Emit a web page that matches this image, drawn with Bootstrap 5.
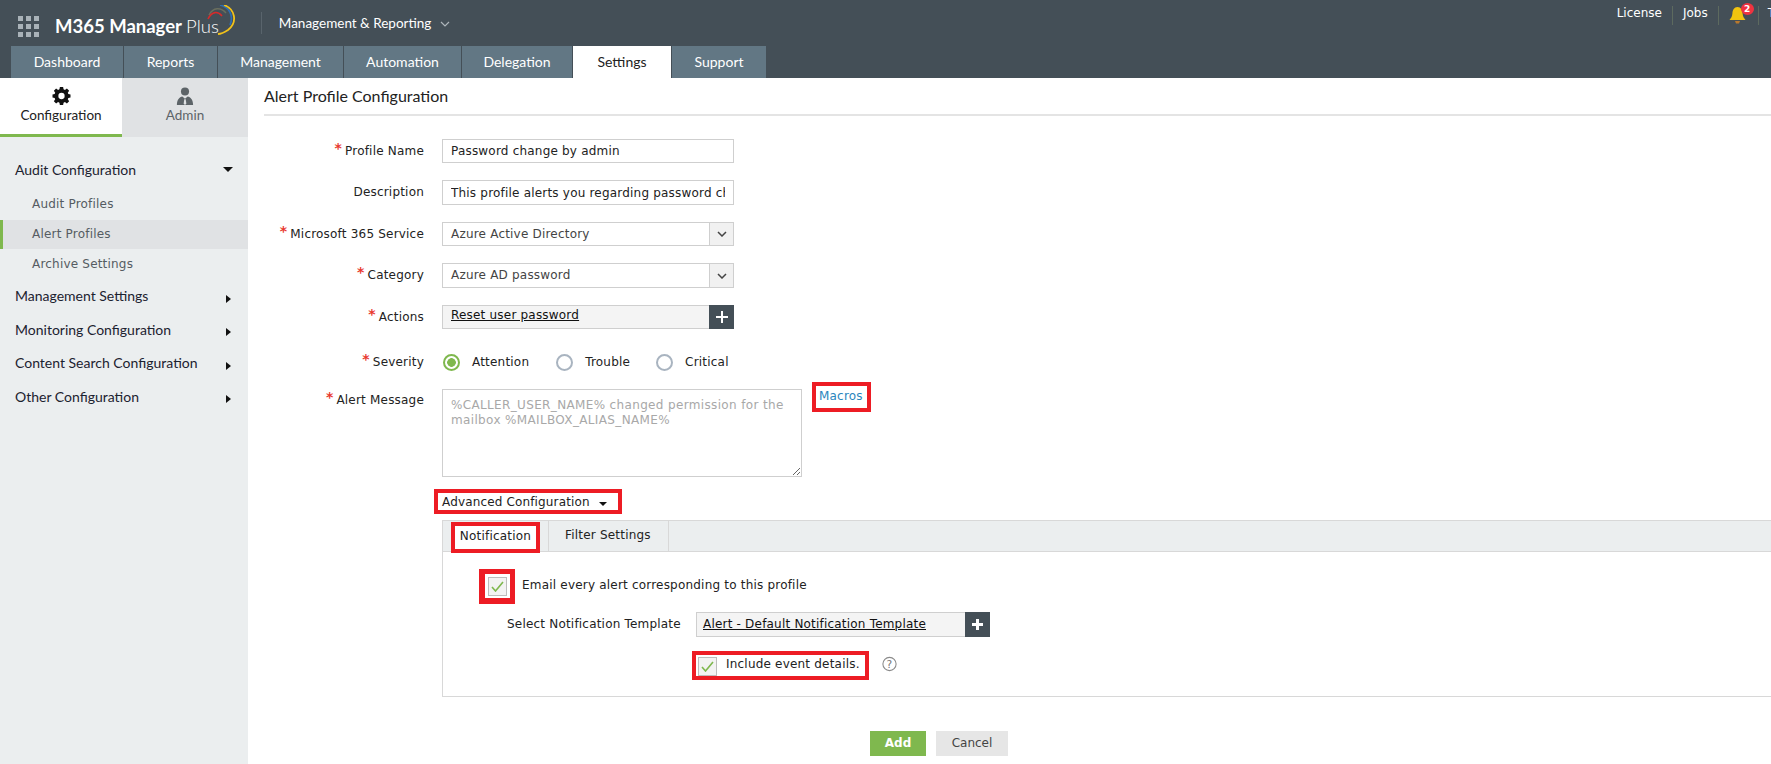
<!DOCTYPE html>
<html lang="en">
<head>
<meta charset="utf-8">
<title>Alert Profile Configuration</title>
<link rel="stylesheet" href="https://cdn.jsdelivr.net/npm/bootstrap@5.3.0/dist/css/bootstrap.min.css">
<style>
html,body{height:764px;overflow:hidden}
body{font-family:"DejaVu Sans",sans-serif;font-size:12px;letter-spacing:.2px;color:#222;background:#fff}
.top-head{background:#444f57;height:78px;letter-spacing:0}
.head-row{height:46px}
.app-grid{display:grid;grid-template-columns:repeat(3,5px);gap:3px;margin:0 16px 0 18px;position:relative;top:3px}
.app-grid i{display:block;width:5px;height:5px;background:#a9b2b8}
.brand-txt{font-family:Lato,sans-serif;font-size:18.5px;font-weight:700;color:#fff;white-space:nowrap;position:relative;top:4px}
.brand-txt span{font-weight:300}
.brand-arc{width:33px;height:30px;margin-left:-15px;margin-top:-7px;flex:none}
.head-sep{width:1px;height:22px;background:#59646c;margin:0 17px 0 24px}
.mod-name{font-family:Lato,sans-serif;font-size:13.5px;color:#fff}
.mod-chev{margin-left:9px;position:relative;top:1px}
.util-links{align-self:flex-start;height:24px;margin:3px -14px 0 0;font-size:12px;color:#fff}
.util-links span.lnk{padding:0 10px;position:relative;top:-2px}
.util-links span.lnk.lnk-end{padding-left:9px}
.util-links .vsep{width:1px;height:19px;background:#5d6a5f}
.bell-wrap{position:relative;width:39px;height:20px}
.bell-wrap svg{position:absolute;left:10px;top:1px}
.bell-count{position:absolute;left:22px;top:-2px;width:13px;height:12px;border-radius:50%;background:#ef3340;color:#fff;font-size:9px;font-weight:700;line-height:12px;text-align:center}
.main-tabs{margin-left:11px;height:32px;gap:1px;border:0}
.main-tabs .nav-link{height:32px;padding:0;line-height:31px;text-align:center;background:#627784;color:#fff;font-family:Lato,sans-serif;font-size:14px;border:0;border-radius:0;margin:0}
.main-tabs .nav-link.active{background:#fff;color:#222}
.tw-1{width:112px}.tw-2{width:93px}.tw-3{width:125px}.tw-4{width:117px}.tw-5{width:110px}.tw-6{width:98px}.tw-7{width:94px}
.app-body{height:686px}
.side-col{width:248px;flex:none;background:#ebeeef;font-family:Lato,sans-serif;letter-spacing:0}
.side-tabs{height:59px}
.side-tab{width:122px;height:59px;text-align:center;font-size:13.5px;color:#222;background:#fff;border-bottom:3px solid #7fb84e;padding-top:9px}
.side-tab.off{width:126px;background:#e0e2e4;border-bottom-color:#e0e2e4;color:#5d6468}
.side-tab svg{display:block;margin:0 auto 0;height:18px}
.side-list{padding-top:15px}
.side-head{height:33.5px;padding:0 15px;font-size:14px;color:#1c2230;display:flex;align-items:center;justify-content:space-between}
.side-head.first{height:34px}
.side-sub{height:29px;margin-bottom:1px;padding:0 0 2px 32px;display:flex;align-items:center;font-family:"DejaVu Sans",sans-serif;font-size:12px;color:#555c62;letter-spacing:.2px}
.side-head + .side-sub{margin-top:4px}
.side-sub.lastsub{margin-bottom:0}
.side-sub.on{background:#e0e2e4;border-left:3px solid #7fb84e;padding-left:29px}
.tri-d{width:0;height:0;border-left:5px solid transparent;border-right:5px solid transparent;border-top:5px solid #111;display:inline-block}
.tri-r{width:0;height:0;border-top:4px solid transparent;border-bottom:4px solid transparent;border-left:5px solid #111;display:inline-block;margin-right:2px;position:relative;top:3px}
.content-col{min-width:0}
.page-title{height:38px;margin-left:16px;border-bottom:2px solid #e4e4e4;font-family:Lato,sans-serif;font-size:16px;line-height:35px;color:#222;letter-spacing:0}
.form-area{padding-top:23px}
.f-row{display:flex;margin-bottom:17px}
.f-row.rw-act{margin-bottom:21px}
.f-row.rw-sev{margin-bottom:15px}
.f-row.rw-msg{margin-bottom:0}
.f-lab{width:176px;height:24px;flex:none;text-align:right;margin-right:18px;color:#222;line-height:25px;white-space:nowrap}
.rw-msg .f-lab{line-height:23px}
.f-lab b{color:#e8392f;font-weight:700;font-size:14px;line-height:0;margin-right:3px;position:relative;top:-2px}
.f-field{width:292px;height:24px}
.f-field.tall{height:25px}
input.f-input{height:100%;border:1px solid #cfcfcf;border-radius:0;padding:0 8px;font-size:12px;letter-spacing:.2px;color:#222;font-family:"DejaVu Sans",sans-serif;box-shadow:none}
.sel-box{display:flex;border:1px solid #cfcfcf;color:#444}
.sel-box .sel-val{flex:1;padding:0 8px;line-height:22px}
.sel-box .sel-btn{width:24px;background:#f1f1f1;border-left:1px solid #cfcfcf;display:flex;align-items:center;justify-content:center}
.pick-box{display:flex;border:1px solid #cfcfcf;background:#f4f4f4}
.pick-box a{flex:1;padding:0 8px;color:#111;line-height:18px;text-decoration:underline}
.tpl-box.pick-box a{line-height:23px;padding-left:6px}
.pick-plus{width:25px;margin:-1px -1px -1px 0;background:#444f57;display:flex;align-items:center;justify-content:center}
.rad-set{height:24px;display:flex;align-items:center;color:#222}
input.rad-in{width:17px;height:17px;margin:0 12px 0 1px;border:2px solid #a9b4c0;background:#fff;box-shadow:none;flex:none;float:none}
input.rad-in:checked{border-color:#7fb84e;background-color:#fff;background-image:radial-gradient(circle,#7fb84e 0 4px,#fff 4.6px)}
.rad-lab{margin-right:26px}
.rad-lab.rl-2{margin-right:25px}
textarea.msg-area{width:360px;height:88px;border:1px solid #cfcfcf;border-radius:0;padding:8px;font-size:12px;letter-spacing:.35px;line-height:15px;color:#a8a8a8;resize:both;font-family:"DejaVu Sans",sans-serif;box-shadow:none;flex:none}
.red-box{border:4px solid #ed1c24;background:#fff}
.macros-box{margin:-7px 0 0 10px;width:59px;height:30px;color:#2b86bd;padding-left:3px;line-height:21px;text-decoration:none}
.adv-wrap{margin-left:194px}
.adv-box{margin-left:-8px;width:188px;height:25px;padding-left:4px;line-height:19px;color:#222;margin-top:12px;letter-spacing:.15px}
.adv-box .tri-d{margin-left:9px;border-left-width:4px;border-right-width:4px;border-top-width:4px}
.notif-panel{margin:6px 0 0 194px;height:177px;border:1px solid #d8d8d8;border-right:0;position:relative}
.panel-tabs{height:31px;background:#ebeeef;border-bottom:1px solid #d8d8d8;padding-left:8px;gap:0}
.panel-tabs .nb-tab{height:31px;margin:1px 8px 0 0;width:89px;text-align:center;line-height:21px;color:#222}
.panel-tabs .nf-tab{width:121px;border-right:1px solid #d8d8d8;border-left:1px solid #d8d8d8;padding-left:16px;line-height:28px;color:#222;height:30px}
.chk-red{width:36px;height:35px;margin:17px 0 0 36px;display:flex;align-items:center;justify-content:center;border-width:5px 5px 6px 6px}
.chk-mark{width:19px;height:19px;border:1px solid #bdbdbd;background:#f3f3f3;display:flex;align-items:center;justify-content:center;flex:none}
.email-txt{margin:17px 0 0 7px;height:35px;line-height:33px}
.tpl-row{margin-top:8px}
.tpl-lab{margin-left:64px;width:189px;line-height:25px;white-space:nowrap}
.tpl-box{width:294px;height:25px}
.inc-row{margin-top:14px}
.inc-box{margin-left:249px;width:177px;height:29px;padding:0 0 3px 2px;display:flex;align-items:center;white-space:nowrap;line-height:14px}
.inc-box .chk-mark{margin-right:9px;margin-top:4px}
.help-ic{margin:5px 0 0 13px}
.btn.add-btn{width:56px;height:25px;padding:0;border:0;border-radius:0;background:#7fb84e;color:#fff;font-size:12px;font-weight:700;line-height:25px}
.btn.cancel-btn{width:72px;height:25px;padding:0;border:0;border-radius:0;background:#e6e6e6;color:#444;font-size:12px;line-height:25px;margin-left:10px}
.act-row{margin:34px 0 0 622px}
</style>
</head>
<body>
<header class="top-head d-flex flex-column">
  <div class="head-row d-flex align-items-center">
    <div class="app-grid"><i></i><i></i><i></i><i></i><i></i><i></i><i></i><i></i><i></i></div>
    <div class="brand-txt">M365 Manager <span>Plus</span></div>
    <svg class="brand-arc" viewBox="0 0 33 30" fill="none">
      <path d="M5 10C9 2 17 2 22 8" stroke="#6b6f5e" stroke-width="1.4"/>
      <path d="M4 14C8 6 14 6 18 11" stroke="#d62b2b" stroke-width="1.6"/>
      <path d="M16 0C25 2 30 10 26 20" stroke="#2f6fb3" stroke-width="1.6"/>
      <path d="M20 0C31 4 34 17 24 25C21 27 17 29 14 29" stroke="#f2c21a" stroke-width="1.8"/>
    </svg>
    <div class="head-sep"></div>
    <div class="mod-name">Management &amp; Reporting</div>
    <svg class="mod-chev" width="10" height="6" viewBox="0 0 10 6" fill="none"><path d="M1 1l4 4 4-4" stroke="#aeb6bb" stroke-width="1.2"/></svg>
    <div class="util-links ms-auto d-flex align-items-center">
      <span class="lnk">License</span><span class="vsep"></span>
      <span class="lnk">Jobs</span><span class="vsep"></span>
      <span class="bell-wrap"><svg width="17" height="19" viewBox="0 0 17 19"><path d="M8.500 1C5 1 3.600 4 3.400 7.500C3.200 10.500 2 12 .5 14H16.500C15 12 13.800 10.500 13.600 7.500C13.400 4 12 1 8.500 1Z" fill="#f1c40f"/><path d="M6 15h5l-1 2.500H7z" fill="#b9792d"/></svg><span class="bell-count">2</span></span><span class="vsep"></span>
      <span class="lnk lnk-end">T</span>
    </div>
  </div>
  <nav class="nav main-tabs">
    <a class="nav-link tw-1" href="#">Dashboard</a>
    <a class="nav-link tw-2" href="#">Reports</a>
    <a class="nav-link tw-3" href="#">Management</a>
    <a class="nav-link tw-4" href="#">Automation</a>
    <a class="nav-link tw-5" href="#">Delegation</a>
    <a class="nav-link tw-6 active" href="#">Settings</a>
    <a class="nav-link tw-7" href="#">Support</a>
  </nav>
</header>
<div class="app-body d-flex">
  <aside class="side-col">
    <div class="side-tabs d-flex">
      <div class="side-tab">
        <svg width="19" height="18" viewBox="0 0 20 20"><path fill="#111" fill-rule="evenodd" d="M8.200 0h3.600l.5 2.600 1.500.6 2.200-1.500 2.500 2.500-1.500 2.200.6 1.500 2.400.5v3.200l-2.400.5-.6 1.500 1.500 2.200-2.500 2.500-2.200-1.500-1.500.6-.5 2.600H8.200l-.5-2.600-1.500-.6L4 18.300 1.500 15.800 3 13.600l-.6-1.500L0 11.600V8.400l2.400-.5.600-1.500L1.500 4.200 4 1.700l2.200 1.500 1.500-.6zM10 6.500a3.500 3.500 0 1 0 0 7 3.500 3.500 0 0 0 0-7z"/></svg>
        Configuration
      </div>
      <div class="side-tab off">
        <svg width="20" height="18" viewBox="0 0 20 20"><circle cx="10" cy="5" r="4.500" fill="#5d6468"/><path d="M1 20c0-6 3-9 6-9.500l3 2.500 3-2.500c3 .5 6 3.500 6 9.500z" fill="#5d6468"/><path d="M9.200 13.500h1.600l.7 5-1.500 1.500-1.500-1.500z" fill="#e0e2e4"/></svg>
        Admin
      </div>
    </div>
    <div class="side-list">
      <div class="side-head first"><span>Audit Configuration</span><i class="tri-d"></i></div>
      <div class="side-sub">Audit Profiles</div>
      <div class="side-sub on">Alert Profiles</div>
      <div class="side-sub lastsub">Archive Settings</div>
      <div class="side-head"><span>Management Settings</span><i class="tri-r"></i></div>
      <div class="side-head"><span>Monitoring Configuration</span><i class="tri-r"></i></div>
      <div class="side-head"><span>Content Search Configuration</span><i class="tri-r"></i></div>
      <div class="side-head"><span>Other Configuration</span><i class="tri-r"></i></div>
    </div>
  </aside>
  <main class="content-col flex-grow-1">
    <div class="page-title">Alert Profile Configuration</div>
    <form class="form-area">
      <div class="f-row">
        <label class="f-lab"><b>*</b>Profile Name</label>
        <div class="f-field"><input class="form-control f-input" value="Password change by admin"></div>
      </div>
      <div class="f-row">
        <label class="f-lab">Description</label>
        <div class="f-field tall"><input class="form-control f-input" value="This profile alerts you regarding password changes by admin"></div>
      </div>
      <div class="f-row">
        <label class="f-lab"><b>*</b>Microsoft 365 Service</label>
        <div class="f-field sel-box"><span class="sel-val">Azure Active Directory</span><span class="sel-btn"><svg width="10" height="6" viewBox="0 0 10 6" fill="none"><path d="M1 1l4 4 4-4" stroke="#444" stroke-width="1.500"/></svg></span></div>
      </div>
      <div class="f-row">
        <label class="f-lab"><b>*</b>Category</label>
        <div class="f-field tall sel-box"><span class="sel-val">Azure AD password</span><span class="sel-btn"><svg width="10" height="6" viewBox="0 0 10 6" fill="none"><path d="M1 1l4 4 4-4" stroke="#444" stroke-width="1.500"/></svg></span></div>
      </div>
      <div class="f-row rw-act">
        <label class="f-lab"><b>*</b>Actions</label>
        <div class="f-field pick-box"><a href="#">Reset user password</a><span class="pick-plus"><svg width="12" height="12" viewBox="0 0 12 12"><path d="M6 0v12M0 6h12" stroke="#fff" stroke-width="2"/></svg></span></div>
      </div>
      <div class="f-row rw-sev">
        <label class="f-lab"><b>*</b>Severity</label>
        <div class="rad-set">
          <input class="form-check-input rad-in" type="radio" name="sev" checked><span class="rad-lab">Attention</span>
          <input class="form-check-input rad-in" type="radio" name="sev"><span class="rad-lab rl-2">Trouble</span>
          <input class="form-check-input rad-in" type="radio" name="sev"><span class="rad-lab">Critical</span>
        </div>
      </div>
      <div class="f-row rw-msg">
        <label class="f-lab"><b>*</b>Alert Message</label>
        <textarea class="form-control msg-area">%CALLER_USER_NAME% changed permission for the mailbox %MAILBOX_ALIAS_NAME%</textarea>
        <a class="red-box macros-box" href="#">Macros</a>
      </div>
      <div class="adv-wrap"><div class="red-box adv-box">Advanced Configuration<i class="tri-d"></i></div></div>
      <section class="notif-panel">
        <div class="panel-tabs d-flex">
          <div class="red-box nb-tab">Notification</div>
          <div class="nf-tab">Filter Settings</div>
        </div>
        <div class="d-flex">
          <div class="red-box chk-red"><span class="chk-mark"><svg width="13" height="11" viewBox="0 0 13 11" fill="none"><path d="M1 6l3.500 4L12 1" stroke="#7fb84e" stroke-width="1.600"/></svg></span></div>
          <div class="email-txt">Email every alert corresponding to this profile</div>
        </div>
        <div class="d-flex tpl-row">
          <div class="tpl-lab">Select Notification Template</div>
          <div class="tpl-box pick-box"><a href="#">Alert - Default Notification Template</a><span class="pick-plus"><svg width="11" height="11" viewBox="0 0 11 11"><path d="M5.500 0v11M0 5.500h11" stroke="#fff" stroke-width="3"/></svg></span></div>
        </div>
        <div class="d-flex inc-row">
          <div class="red-box inc-box"><span class="chk-mark"><svg width="13" height="11" viewBox="0 0 13 11" fill="none"><path d="M1 6l3.500 4L12 1" stroke="#7fb84e" stroke-width="1.600"/></svg></span>Include event details.</div>
          <svg class="help-ic" width="15" height="16" viewBox="0 0 14 15" fill="none"><circle cx="7" cy="7.500" r="6.200" stroke="#8a8a8a"/><text x="7" y="11" text-anchor="middle" font-size="10" font-family="DejaVu Sans" fill="#777">?</text></svg>
        </div>
      </section>
      <div class="act-row d-flex">
        <button type="button" class="btn add-btn">Add</button>
        <button type="button" class="btn cancel-btn">Cancel</button>
      </div>
    </form>
  </main>
</div>
<script src="https://cdn.jsdelivr.net/npm/bootstrap@5.3.0/dist/js/bootstrap.bundle.min.js"></script>
</body>
</html>
